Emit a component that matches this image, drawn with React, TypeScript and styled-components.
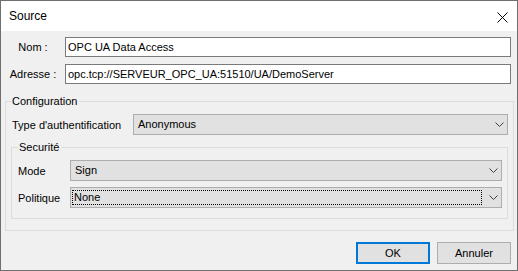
import * as React from "react";
import styled, { createGlobalStyle } from "styled-components";

const GlobalStyle = createGlobalStyle`
  html, body {
    margin: 0;
    padding: 0;
    background: #ffffff;
  }
  body {
    font-family: "Liberation Sans", Arial, sans-serif;
    font-size: 11px;
    color: #000;
  }
`;

const Window = styled.div`
  width: 518px;
  height: 271px;
  box-sizing: border-box;
  border: 1px solid #6f6f6f;
  display: flex;
  flex-direction: column;
  background: #f0f0f0;
`;

const TitleBar = styled.div`
  height: 30px;
  flex: none;
  background: #ffffff;
  display: flex;
  align-items: center;
  justify-content: space-between;
  padding: 0 9px 0 8px;
  font-size: 12px;
`;

const CloseIcon = styled.svg`
  margin-top: 3px;
`;

const Body = styled.div`
  flex: 1;
  display: flex;
  flex-direction: column;
  padding: 6px 3px 0 4px;
`;

const FieldRow = styled.div`
  display: flex;
  align-items: center;
  gap: 6px;
  height: 20px;
  padding: 0 3px 0 2px;
  & + & {
    margin-top: 7px;
  }
`;

const FieldLabel = styled.span`
  width: 52px;
  flex: none;
  text-align: center;
  white-space: nowrap;
`;

const TextBox = styled.div`
  flex: 1;
  height: 20px;
  box-sizing: border-box;
  border: 1px solid #7a7a7a;
  background: #ffffff;
  padding: 0 2px;
  display: flex;
  align-items: center;
  white-space: nowrap;
`;

const Group = styled.fieldset<{ $pad: string; $top: number }>`
  margin: ${(p) => p.$top}px 0 0 0;
  padding: ${(p) => p.$pad};
  border: 1px solid #dcdcdc;
  min-width: 0;
  display: flex;
  flex-direction: column;
`;

const Legend = styled.legend`
  padding: 0 2px 0 1px;
  margin: 0;
  line-height: 13px;
  height: 13px;
`;

const Row = styled.div<{ $labelWidth: number; $indent?: number }>`
  display: flex;
  align-items: center;
  height: 21px;
  padding-left: ${(p) => p.$indent ?? 0}px;
  & + & {
    margin-top: 6px;
  }
  & > span {
    width: ${(p) => p.$labelWidth}px;
    flex: none;
    white-space: nowrap;
  }
`;

const Combo = styled.div`
  flex: 1;
  height: 21px;
  box-sizing: border-box;
  background: #e1e1e1;
  border: 1px solid #adadad;
  display: flex;
  align-items: center;
  padding-right: 3px;
`;

const ComboValue = styled.div<{ $focused?: boolean }>`
  flex: 1;
  box-sizing: border-box;
  height: 15px;
  line-height: 13px;
  white-space: nowrap;
  margin-left: ${(p) => (p.$focused ? 1 : 0)}px;
  padding-left: ${(p) => (p.$focused ? 1 : 3)}px;
  border: 1px ${(p) => (p.$focused ? "dotted #000" : "solid transparent")};
`;

const Chevron = styled.svg`
  flex: none;
  margin-left: 7px;
`;

const ButtonBar = styled.div`
  display: flex;
  justify-content: flex-end;
  gap: 7px;
  margin-top: 11px;
  padding-right: 3px;
`;

const Button = styled.button<{ $default?: boolean }>`
  width: 74px;
  height: 22px;
  box-sizing: border-box;
  margin: 0;
  padding: 0;
  font-family: "Liberation Sans", Arial, sans-serif;
  font-size: 11px;
  color: #000;
  background: #e1e1e1;
  border: ${(p) => (p.$default ? "2px solid #0078d7" : "1px solid #adadad")};
`;

function Select({ value, focused }: { value: string; focused?: boolean }) {
  return (
    <Combo>
      <ComboValue $focused={focused}>{value}</ComboValue>
      <Chevron width="9" height="6" viewBox="0 0 9 6">
        <polyline
          points="0.5,0.5 4.5,4.5 8.5,0.5"
          fill="none"
          stroke="#404040"
          strokeWidth="1"
        />
      </Chevron>
    </Combo>
  );
}

export default function App() {
  return (
    <>
      <GlobalStyle />
      <Window>
        <TitleBar>
          <span>Source</span>
          <CloseIcon width="11" height="11" viewBox="0 0 11 11">
            <path d="M0.5 0.5 L10.5 10.5 M10.5 0.5 L0.5 10.5" stroke="#000" strokeWidth="1" />
          </CloseIcon>
        </TitleBar>
        <Body>
          <FieldRow>
            <FieldLabel>Nom :</FieldLabel>
            <TextBox>OPC UA Data Access</TextBox>
          </FieldRow>
          <FieldRow>
            <FieldLabel>Adresse :</FieldLabel>
            <TextBox>opc.tcp://SERVEUR_OPC_UA:51510/UA/DemoServer</TextBox>
          </FieldRow>
          <Group $pad="6px 5px 11px 5px" $top={11}>
            <Legend>Configuration</Legend>
            <Row $labelWidth={121} $indent={1}>
              <span>Type d'authentification</span>
              <Select value="Anonymous" />
            </Row>
            <Group $pad="6px 5px 10px 6px" $top={6}>
              <Legend>Securité</Legend>
              <Row $labelWidth={52}>
                <span>Mode</span>
                <Select value="Sign" />
              </Row>
              <Row $labelWidth={52}>
                <span>Politique</span>
                <Select value="None" focused />
              </Row>
            </Group>
          </Group>
          <ButtonBar>
            <Button $default>OK</Button>
            <Button>Annuler</Button>
          </ButtonBar>
        </Body>
      </Window>
    </>
  );
}
